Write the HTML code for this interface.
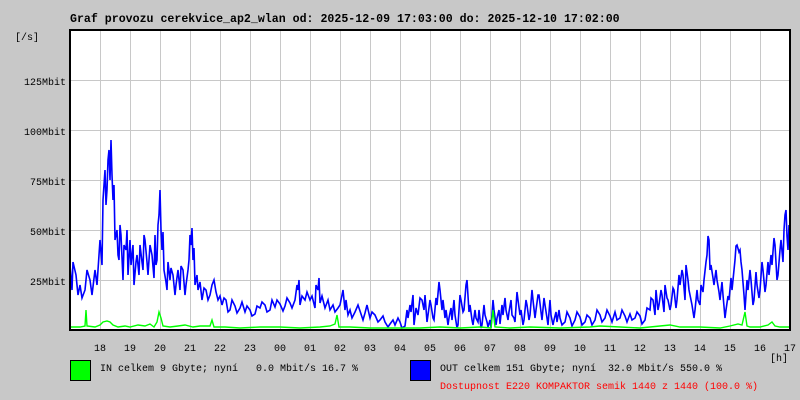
<!DOCTYPE html>
<html><head><meta charset="utf-8"><style>
html,body{margin:0;padding:0;background:#c8c8c8;width:800px;height:400px;overflow:hidden}
svg text{font-family:"Liberation Mono",monospace;font-size:10px;white-space:pre}
svg text.t{font-size:11.6px;font-weight:bold}
</style></head><body>
<svg width="800" height="400" xmlns="http://www.w3.org/2000/svg">
<rect width="800" height="400" fill="#c8c8c8"/>
<text class="t" x="70" y="22" fill="#000">Graf provozu cerekvice_ap2_wlan od: 2025-12-09 17:03:00 do: 2025-12-10 17:02:00</text>
<rect x="70" y="30" width="720" height="300" fill="#fff"/>
<g stroke="#c8c8c8" stroke-width="1">
<path d="M100.5 30V330M130.5 30V330M160.5 30V330M190.5 30V330M220.5 30V330M250.5 30V330M280.5 30V330M310.5 30V330M340.5 30V330M370.5 30V330M400.5 30V330M430.5 30V330M460.5 30V330M490.5 30V330M520.5 30V330M550.5 30V330M580.5 30V330M610.5 30V330M640.5 30V330M670.5 30V330M700.5 30V330M730.5 30V330M760.5 30V330"/>
<path d="M70 80.5H790M70 130.5H790M70 180.5H790M70 230.5H790M70 280.5H790"/>
</g>
<polyline fill="none" stroke="#00f" stroke-width="1.6" points="70,265 72,290 73,262 76,275 78,295 80,285 82,298 85,290 87,270 90,280 92,295 95,270 97,285 100,240 102,265 103,200 105,170 106,205 107,190 108,160 109,150 110,180 111,140 112,175 113,200 114,185 115,240 117,230 118,255 119,260 120,225 121,235 123,280 124,245 126,250 127,230 128,275 130,240 131,265 133,245 134,285 136,262 137,255 139,275 140,245 142,262 143,270 144,235 145,240 147,262 148,275 150,245 152,255 154,278 155,235 156,265 157,260 158,225 159,215 160,190 161,230 162,250 163,232 164,270 166,282 167,290 168,262 170,280 171,268 173,275 175,295 176,285 178,270 180,290 181,266 183,270 185,295 186,285 188,270 189,260 190,235 191,245 192,228 193,260 194,248 195,285 197,275 198,290 200,282 202,300 204,288 206,290 208,300 210,295 212,285 214,280 216,292 218,300 220,296 222,305 224,298 226,300 228,312 230,310 232,300 235,306 237,313 240,308 242,302 245,312 247,306 250,310 252,316 255,314 257,306 260,308 262,302 265,305 267,312 270,310 272,300 275,307 277,300 280,304 283,311 285,306 287,298 290,303 292,308 295,300 297,285 298,290 299,280 300,305 302,296 305,300 307,292 310,300 312,296 315,308 316,285 318,290 319,278 320,303 322,296 325,308 328,300 330,310 333,305 335,312 338,308 340,305 342,295 343,290 345,310 346,300 348,315 350,310 352,318 355,312 358,305 360,311 363,320 365,313 367,305 370,318 372,312 375,315 378,322 380,320 383,316 385,322 388,327 390,324 393,320 395,325 398,318 400,322 402,328 405,326 407,310 408,318 410,305 411,312 413,295 414,325 416,308 418,315 420,298 422,300 424,310 425,295 427,322 428,315 430,300 431,305 433,318 434,320 436,298 437,305 439,282 440,290 442,310 443,300 445,318 446,310 448,325 449,318 451,308 452,320 454,300 455,315 457,328 458,325 460,295 461,300 463,312 464,310 466,285 467,280 469,312 470,305 472,320 473,325 475,310 476,318 478,322 479,310 481,328 482,325 484,305 485,315 487,322 488,327 490,320 491,328 493,300 494,310 496,325 497,318 499,310 500,324 502,305 503,315 505,298 506,310 508,320 509,312 511,300 512,315 514,318 515,322 517,292 518,300 520,315 521,310 523,325 524,320 526,300 527,305 529,320 530,315 532,290 533,300 535,318 536,310 538,295 539,295 541,312 542,320 544,298 545,305 547,318 548,325 550,300 551,315 553,325 554,320 556,312 557,322 559,310 560,318 562,325 565,322 567,312 570,318 572,326 575,320 577,312 580,317 582,325 585,322 587,315 590,318 592,325 595,320 597,310 600,315 602,322 605,318 607,310 610,316 612,322 615,312 617,320 620,318 622,310 625,316 627,322 630,314 632,320 635,318 637,312 640,316 642,324 645,320 647,308 650,310 651,298 653,300 655,315 656,290 658,310 659,305 661,290 662,295 664,312 665,285 667,298 668,300 670,310 671,305 673,288 674,290 676,308 677,300 679,275 680,285 682,270 683,275 685,300 686,265 688,280 689,290 691,300 692,305 694,318 695,310 697,290 698,300 700,305 701,285 703,292 704,280 706,262 707,255 708,236 709,240 710,270 711,265 713,278 714,285 716,270 717,280 719,292 720,300 722,282 723,295 725,318 726,310 728,296 729,300 731,278 732,290 734,270 735,260 736,246 737,245 739,252 740,250 741,262 742,270 744,295 745,310 747,280 748,290 750,270 751,280 753,305 754,300 756,272 757,285 759,298 760,290 762,262 763,270 765,292 766,285 768,262 769,275 771,255 772,265 774,238 775,245 777,280 778,275 780,250 781,240 783,262 784,230 785,215 786,210 787,236 788,250 789,225 790,230"/>
<polyline fill="none" stroke="#0f0" stroke-width="1.4" points="70,327 80,327 85,326 86,310 87,326 95,327 100,325 103,322 107,321 110,322 113,325 118,327 125,326 130,327 138,325 145,326 150,324 154,327 157,322 159,312 161,318 163,326 170,327 178,326 185,325 193,327 200,326 210,326 212,320 214,327 225,327 240,328 260,327 280,327 300,328 320,327 330,326 335,324 337,315 339,327 350,327 370,328 400,328 420,328 440,327 460,328 480,327 491,328 493,310 495,327 510,328 530,327 560,328 590,327 600,326 620,327 640,328 660,326 670,325 680,327 700,327 720,328 730,326 738,324 742,325 745,312 747,326 750,327 760,327 768,325 772,322 775,326 780,327 790,327"/>
<rect x="70" y="30" width="720" height="300" fill="none" stroke="#000" stroke-width="2"/>
<g fill="#000">
<text x="15" y="40">[/s]</text>
</g>
<g fill="#000" text-anchor="end">
<text x="66" y="85">125Mbit</text>
<text x="66" y="135">100Mbit</text>
<text x="66" y="185">75Mbit</text>
<text x="66" y="235">50Mbit</text>
<text x="66" y="285">25Mbit</text>
</g>
<g fill="#000" text-anchor="middle">
<text x="100" y="351">18</text><text x="130" y="351">19</text><text x="160" y="351">20</text><text x="190" y="351">21</text><text x="220" y="351">22</text><text x="250" y="351">23</text><text x="280" y="351">00</text><text x="310" y="351">01</text><text x="340" y="351">02</text><text x="370" y="351">03</text><text x="400" y="351">04</text><text x="430" y="351">05</text><text x="460" y="351">06</text><text x="490" y="351">07</text><text x="520" y="351">08</text><text x="550" y="351">09</text><text x="580" y="351">10</text><text x="610" y="351">11</text><text x="640" y="351">12</text><text x="670" y="351">13</text><text x="700" y="351">14</text><text x="730" y="351">15</text><text x="760" y="351">16</text><text x="790" y="351">17</text>
</g>
<text x="770" y="361" fill="#000">[h]</text>
<rect x="70.5" y="360.5" width="20" height="20" fill="#0f0" stroke="#000"/>
<text x="100" y="371" fill="#000">IN celkem 9 Gbyte; nyní   0.0 Mbit/s 16.7 %</text>
<rect x="410.5" y="360.5" width="20" height="20" fill="#00f" stroke="#000"/>
<text x="440" y="371" fill="#000">OUT celkem 151 Gbyte; nyní  32.0 Mbit/s 550.0 %</text>
<text x="440" y="389" fill="#f00">Dostupnost E220 KOMPAKTOR semik 1440 z 1440 (100.0 %)</text>
</svg>
</body></html>
